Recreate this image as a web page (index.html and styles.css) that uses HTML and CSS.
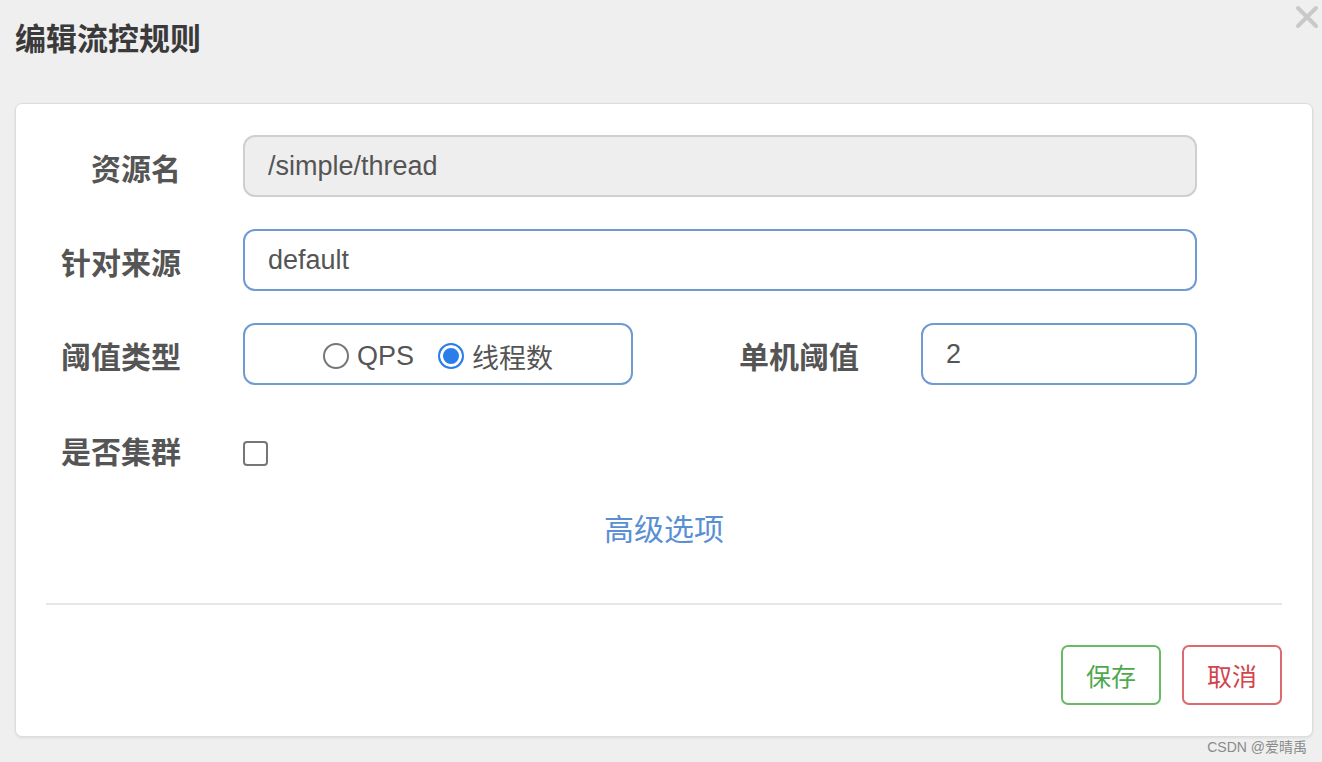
FILE: index.html
```html
<!DOCTYPE html>
<html lang="zh-CN">
<head>
  <meta charset="UTF-8" />
  <meta name="viewport" content="width=device-width, initial-scale=1.0" />
  <title>编辑流控规则</title>
  <link rel="stylesheet" href="styles.css">
</head>
<body>

  <div class="dialog-head">
    <h2>编辑流控规则</h2>
    <button class="close-btn" type="button" aria-label="关闭">
      <svg width="24" height="24" viewBox="0 0 24 24">
        <path d="M3 3 L21 21 M21 3 L3 21" stroke="#c9c9c9" stroke-width="4" stroke-linecap="round" fill="none" />
      </svg>
    </button>
  </div>

  <div class="card">
    <form id="rule-form">
      <div class="row">
        <label>资源名</label>
        <input type="text" class="field" value="/simple/thread" disabled />
      </div>

      <div class="row">
        <label>针对来源</label>
        <input type="text" class="field active" value="default" autofocus />
      </div>

      <div class="row">
        <label>阈值类型</label>
        <div class="split">
          <div class="radio-box">
            <label class="opt"><input type="radio" name="grade" /> QPS</label>
            <label class="opt"><input type="radio" name="grade" checked /> 线程数</label>
          </div>
          <label class="sub-label">单机阈值</label>
          <input type="text" class="field active" value="2" />
        </div>
      </div>

      <div class="row row-check">
        <label>是否集群</label>
        <div><input type="checkbox" class="check" /></div>
      </div>

      <div class="advanced"><a href="#">高级选项</a></div>
    </form>

    <hr class="divider" />

    <div class="actions">
      <button type="button" class="btn btn-save">保存</button>
      <button type="button" class="btn btn-cancel">取消</button>
    </div>
  </div>

  <div class="watermark">CSDN @爱晴禹</div>

</body>
</html>
```

FILE: styles.css
```css
body {
  margin: 0;
  background: #efefef;
  font-family: "Liberation Sans", "Noto Sans CJK SC", sans-serif;
  color: #555;
  height: 762px;
  overflow: hidden;
}

.dialog-head {
  display: flex;
  justify-content: space-between;
  align-items: flex-start;
  height: 103px;
  padding: 0 3px 0 15px;
  box-sizing: border-box;
}

.dialog-head h2 {
  margin: 22px 0 0;
  font-size: 31px;
  line-height: 36px;
  font-weight: bold;
  color: #3a3a3a;
}

.close-btn {
  margin-top: 5px;
  padding: 0;
  border: none;
  background: none;
  cursor: pointer;
}

.card {
  margin: 0 9px 0 15px;
  height: 634px;
  box-sizing: border-box;
  background: white;
  border: 1px solid #dcdcdc;
  border-radius: 7px;
  box-shadow: 0 1px 3px rgba(0, 0, 0, 0.08);
  padding: 31px 30px;
}

.row {
  display: grid;
  grid-template-columns: 135px 954px;
  column-gap: 62px;
  margin-bottom: 32px;
}

.row > label,
.split .sub-label {
  font-size: 30px;
  font-weight: bold;
  text-align: right;
  line-height: 36px;
  padding-top: 17px;
  color: #555;
}

.field {
  height: 62px;
  box-sizing: border-box;
  border: 2px solid #cfcfcf;
  border-radius: 12px;
  padding: 0 23px;
  font-family: inherit;
  font-size: 27px;
  color: #555;
  background: white;
  outline: none;
}

.field:disabled {
  background: #eeeeee;
  color: #555;
}

.field.active {
  border-color: #6f9bd2;
}

.split {
  display: grid;
  grid-template-columns: 390px 1fr 276px;
  column-gap: 62px;
}

.radio-box {
  height: 62px;
  box-sizing: border-box;
  border: 2px solid #6f9bd2;
  border-radius: 12px;
  display: flex;
  justify-content: center;
  align-items: center;
  gap: 24px;
}

.opt {
  display: flex;
  align-items: center;
  gap: 8px;
  font-size: 27px;
  color: #555;
  padding-top: 4px;
}

.opt input {
  appearance: none;
  margin: 0;
  width: 26px;
  height: 26px;
  border: 2px solid #767676;
  border-radius: 50%;
  box-sizing: border-box;
  background: white;
}

.opt input:checked {
  border-color: #2b7de9;
  background: #2b7de9;
  box-shadow: inset 0 0 0 3px white;
}

.row-check {
  margin-top: 50px;
  margin-bottom: 0;
}

.row-check > label {
  padding-top: 0;
}

.check {
  appearance: none;
  margin: 6px 0 0;
  width: 25px;
  height: 25px;
  border: 2px solid #767676;
  border-radius: 4px;
  box-sizing: border-box;
  background: white;
}

.advanced {
  text-align: center;
  margin-top: 41px;
}

.advanced a {
  font-size: 30px;
  line-height: 36px;
  color: #5a8fd4;
  text-decoration: none;
}

.divider {
  border: none;
  border-top: 2px solid #e7e7e7;
  margin: 55px 0 0;
}

.actions {
  display: flex;
  justify-content: flex-end;
  gap: 21px;
  margin-top: 40px;
}

.btn {
  width: 100px;
  height: 60px;
  border-radius: 7px;
  background: white;
  font-family: inherit;
  font-size: 25px;
  cursor: pointer;
}

.btn-save {
  border: 2px solid #68ba68;
  color: #4fa84f;
}

.btn-cancel {
  border: 2px solid #dc6a6f;
  color: #d2454c;
}

.watermark {
  text-align: right;
  margin-top: -1px;
  padding-right: 15px;
  font-size: 14px;
  color: #8a8a8a;
}
```
